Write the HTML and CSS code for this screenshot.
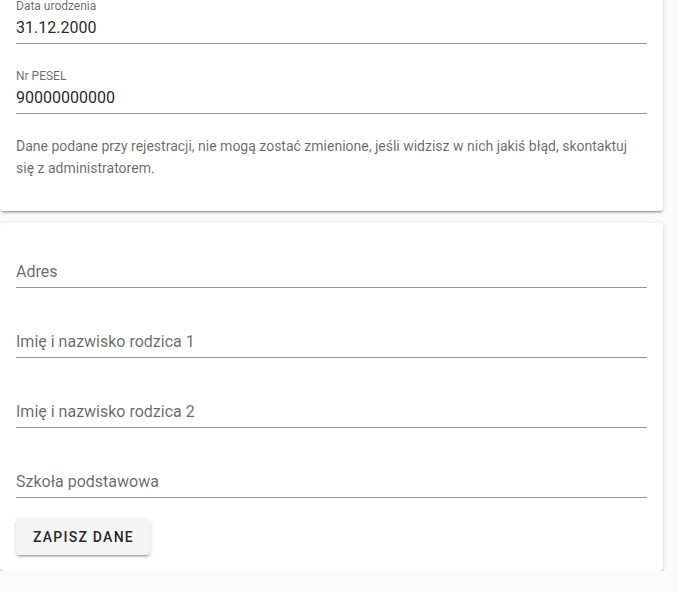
FILE: index.html
```html
<!DOCTYPE html>
<html lang="pl">
<head>
<meta charset="utf-8">
<title>Dane</title>
<link rel="stylesheet" href="styles.css">
</head>
<body>
<div class="page">
  <section class="card card-first">
    <div class="field">
      <div class="label-active">Data urodzenia</div>
      <div class="slot"><span class="value">31.12.2000</span></div>
      <div class="details"></div>
    </div>
    <div class="field">
      <div class="label-active">Nr PESEL</div>
      <div class="slot"><span class="value">90000000000</span></div>
      <div class="details"></div>
    </div>
    <p class="note">Dane podane przy rejestracji, nie mogą zostać zmienione, jeśli widzisz w nich jakiś błąd, skontaktuj się z administratorem.</p>
  </section>
  <section class="card">
    <div class="field">
      <div class="slot"><span class="placeholder">Adres</span></div>
      <div class="details"></div>
    </div>
    <div class="field">
      <div class="slot"><span class="placeholder">Imię i nazwisko rodzica 1</span></div>
      <div class="details"></div>
    </div>
    <div class="field">
      <div class="slot"><span class="placeholder">Imię i nazwisko rodzica 2</span></div>
      <div class="details"></div>
    </div>
    <div class="field">
      <div class="slot"><span class="placeholder">Szkoła podstawowa</span></div>
      <div class="details"></div>
    </div>
    <button class="btn" type="button">Zapisz dane</button>
  </section>
</div>
</body>
</html>
```
FILE: styles.css
```css
html, body {
  margin: 0;
  padding: 0;
  background: #fafafa;
  font-family: Roboto, "Liberation Sans", Arial, sans-serif;
  color: rgba(0, 0, 0, 0.87);
  overflow: hidden;
}

.page {
  width: 663px;
  margin-top: -21px;
  display: flex;
  flex-direction: column;
  gap: 12px;
}

.card {
  background: #fff;
  border-radius: 4px;
  box-shadow: 0 3px 1px -2px rgba(0,0,0,.2), 0 2px 2px 0 rgba(0,0,0,.14), 0 1px 5px 0 rgba(0,0,0,.12);
  padding: 16px;
  display: flex;
  flex-direction: column;
  align-items: flex-start;
}

.field {
  align-self: stretch;
  height: 70px;
  padding-top: 16px;
  box-sizing: border-box;
  display: flex;
  flex-direction: column;
}

.label-active {
  font-size: 12px;
  line-height: 15px;
  height: 15px;
  margin-top: -12px;
  margin-bottom: -3px;
  color: rgba(0, 0, 0, 0.6);
}

.slot {
  height: 33px;
  box-sizing: border-box;
  border-bottom: 1px solid rgba(0, 0, 0, 0.42);
  display: flex;
  align-items: flex-start;
}

.value {
  font-size: 16px;
  line-height: 20px;
  padding-top: 7px;
}

.placeholder {
  font-size: 16px;
  line-height: 20px;
  padding-top: 7px;
  color: rgba(0, 0, 0, 0.6);
}

.details {
  height: 21px;
}

.note {
  margin: 0 0 16px;
  font-size: 14px;
  line-height: 22px;
  color: rgba(0, 0, 0, 0.6);
}

.btn {
  height: 36px;
  padding: 0 16px 0 17px;
  border: 0;
  border-radius: 4px;
  background: #f5f5f5;
  box-shadow: 0 3px 1px -2px rgba(0,0,0,.2), 0 2px 2px 0 rgba(0,0,0,.14), 0 1px 5px 0 rgba(0,0,0,.12);
  font-family: Roboto, "Liberation Sans", Arial, sans-serif;
  font-size: 14px;
  font-weight: 500;
  letter-spacing: 0.0892857143em;
  text-transform: uppercase;
  color: rgba(0, 0, 0, 0.87);
}
```
